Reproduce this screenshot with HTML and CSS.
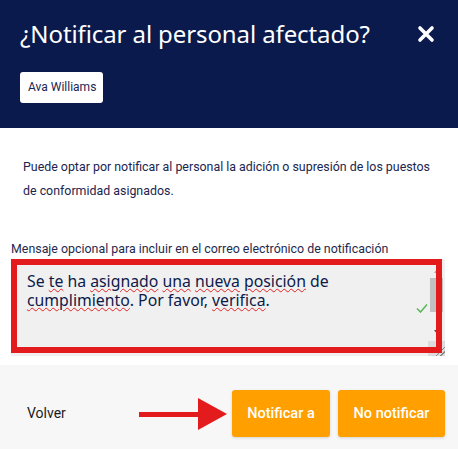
FILE: index.html
```html
<!DOCTYPE html>
<html lang="es">
<head>
<meta charset="utf-8">
<link rel="stylesheet" href="styles.css">
</head>
<body>
<div class="modal">
  <div class="header">
    <div class="title-row">
      <h1 class="title">¿Notificar al personal afectado?</h1>
      <svg class="close" width="18" height="18" viewBox="0 0 18 18"><path d="M3 3 L15 15 M15 3 L3 15" stroke="#fff" stroke-width="3.6" stroke-linecap="round"/></svg>
    </div>
    <span class="chip">Ava Williams</span>
  </div>
  <div class="content">
    <p class="desc">Puede optar por notificar al personal la adición o supresión de los puestos de conformidad asignados.</p>
    <div class="label">Mensaje opcional para incluir en el correo electrónico de notificación</div>
    <div class="field">
      <div class="textarea">
        <div class="text">Se <span class="sp">te</span> ha <span class="sp">asignado</span> <span class="sp">una</span> <span class="sp">nueva</span> <span class="sp">posición</span> de <span class="sp">cumplimiento</span>. Por favor, <span class="sp">verifica</span>.</div>
        <svg class="check" width="12" height="10" viewBox="0 0 12 10"><path d="M1 5.5 L4.5 9 L11 1.5" fill="none" stroke="#5cb85c" stroke-width="1.6"/></svg>
        <div class="scrollbar">
          <div class="arrow up"></div>
          <div class="thumb"></div>
          <div class="arrow down"></div>
        </div>
        <div class="resize"></div>
      </div>
      <div class="annot"></div>
    </div>
  </div>
  <div class="footer">
    <span class="back">Volver</span>
    <div class="actions">
      <svg class="pointer" width="90" height="32" viewBox="0 0 90 32"><rect x="0" y="14" width="62" height="5" fill="#e31b1d"/><polygon points="59,0 88,16 59,32" fill="#e31b1d"/></svg>
      <button class="btn btn-a">Notificar a</button>
      <button class="btn btn-b">No notificar</button>
    </div>
  </div>
</div>
</body>
</html>
```
FILE: styles.css
```css
* { box-sizing: border-box; }
html, body { margin: 0; padding: 0; }
body {
  width: 458px;
  height: 449px;
  background: #fff;
  font-family: Roboto, "Noto Sans", sans-serif;
  overflow: hidden;
}
.modal { display: flex; flex-direction: column; height: 449px; }
.header {
  background: #0b1a4d;
  height: 128px;
  padding: 18px 23px 0 20px;
  display: flex;
  flex-direction: column;
  align-items: flex-start;
}
.title-row {
  display: flex;
  justify-content: space-between;
  align-items: center;
  width: 100%;
}
.title {
  margin: 0;
  color: #fff;
  font-family: "Noto Sans", sans-serif;
  font-size: 24px;
  font-weight: 400;
  line-height: 32px;
  letter-spacing: -0.1px;
}
.close { display: block; }
.chip {
  margin-top: 22px;
  background: #fff;
  color: #1a2550;
  font-size: 12px;
  height: 31px;
  line-height: 31px;
  padding: 0 7px 0 8px;
  border-radius: 3px;
}
.content {
  flex: 1;
  padding: 27px 0 0 11px;
}
.desc {
  margin: 0 0 0 12px;
  color: #1a2550;
  font-size: 12.4px;
  line-height: 24px;
  width: 412px;
}
.label {
  margin-top: 39px;
  color: #1f2a4f;
  font-size: 12.4px;
  line-height: 14px;
}
.field {
  position: relative;
  margin-top: 3px;
  width: 434px;
  height: 97px;
}
.textarea {
  position: relative;
  width: 434px;
  height: 97px;
  background: #f0f0f0;
  padding: 13px 40px 0 16px;
}
.text {
  color: #0d1a4a;
  font-family: "Noto Sans", sans-serif;
  font-size: 15.8px;
  line-height: 19px;
}
.sp {
  text-decoration: underline wavy #e32222;
  text-decoration-thickness: 1px;
  text-underline-offset: 1px;
}
.check { position: absolute; right: 17px; top: 44px; }
.scrollbar {
  position: absolute;
  right: 2px;
  top: 0;
  width: 13px;
  height: 80px;
  display: flex;
  flex-direction: column;
  align-items: center;
}
.arrow { width: 0; height: 0; border-left: 3px solid transparent; border-right: 3px solid transparent; }
.arrow.up { margin-top: 10px; border-bottom: 4px solid #a3a3a3; }
.arrow.down { margin-top: 18px; border-top: 4px solid #505050; }
.thumb { margin-top: 5px; width: 13px; height: 34px; background: #c1c1c1; }
.resize {
  position: absolute;
  right: 0;
  bottom: 0;
  width: 17px;
  height: 15px;
  background: #dcdcdc linear-gradient(135deg, transparent 70%, #888 70%, #888 74%, transparent 74%, transparent 84%, #888 84%, #888 88%, transparent 88%);
}
.annot {
  position: absolute;
  left: 0;
  top: 0;
  width: 431px;
  height: 94px;
  border: 6px solid #e31b1d;
}
.footer {
  height: 84px;
  background: #f7f7f7;
  display: flex;
  align-items: flex-start;
  justify-content: space-between;
  padding: 25px 13px 0 27px;
}
.back {
  color: #1b1b1b;
  font-size: 14px;
  line-height: 47px;
}
.actions { display: flex; align-items: center; gap: 8px; }
.pointer { margin-right: -5px; }
.btn {
  font-family: Roboto, "Noto Sans", sans-serif;
  background: #ffa000;
  color: #fff;
  border: none;
  border-radius: 3px;
  height: 47px;
  font-size: 14.5px;
  font-weight: 500;
  padding: 0;
  white-space: nowrap;
  box-shadow: 0 1px 3px rgba(0,0,0,0.15);
}
.btn-a { width: 98px; }
.btn-b { width: 107px; }
```
